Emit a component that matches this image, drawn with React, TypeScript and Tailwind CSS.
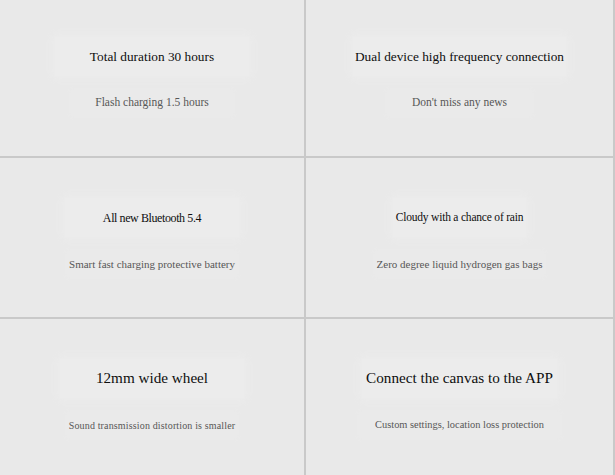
const cells = [
  {
    title: "Total duration 30 hours",
    sub: "Flash charging 1.5 hours",
    titleCls: "text-[13.3px] px-[35px]",
    subCls: "text-[11.5px] px-[24px]",
  },
  {
    title: "Dual device high frequency connection",
    sub: "Don't miss any news",
    titleCls: "text-[13.3px] px-[2px]",
    subCls: "text-[11.5px] px-[25px]",
  },
  {
    title: "All new Bluetooth 5.4",
    sub: "Smart fast charging protective battery",
    titleCls: "text-[12px] tracking-[-0.4px] px-[38px]",
    subCls: "text-[11px] px-[2px]",
  },
  {
    title: "Cloudy with a chance of rain",
    sub: "Zero degree liquid hydrogen gas bags",
    titleCls: "text-[11.5px] tracking-[-0.2px] px-[3px]",
    subCls: "text-[11px] px-[2px]",
  },
  {
    title: "12mm wide wheel",
    sub: "Sound transmission distortion is smaller",
    titleCls: "text-[15.2px] px-[36px]",
    subCls: "text-[10px] tracking-[0.15px] px-[2px]",
  },
  {
    title: "Connect the canvas to the APP",
    sub: "Custom settings, location loss protection",
    titleCls: "text-[15.2px] px-[4px]",
    subCls: "text-[10.4px] px-[16px]",
  },
];

function Cell({ title, sub, titleCls, subCls }: any) {
  return (
    <div className="h-[161px] flex flex-col items-center pt-[40px] border-b-2 border-r-2 border-[#c9c9c9]">
      <div
        className={`h-[39px] flex items-center bg-[#ececec] shadow-[0_0_8px_3px_#ececec] text-[#0e0e0e] whitespace-nowrap ${titleCls}`}
      >
        {title}
      </div>
      <div
        className={`mt-[14px] h-[26px] flex items-center bg-[#eaeaea] shadow-[0_0_5px_2px_#eaeaea] text-[#575757] whitespace-nowrap ${subCls}`}
      >
        {sub}
      </div>
    </div>
  );
}

export default function App() {
  return (
    <div className="w-[615px] h-[475px] overflow-hidden bg-[#e9e9e9] font-['Liberation_Serif','Times_New_Roman',serif]">
      <div className="-mt-[3px] grid grid-cols-[306px_309px]">
        {cells.map((c, i) => (
          <Cell key={i} {...c} />
        ))}
      </div>
    </div>
  );
}
